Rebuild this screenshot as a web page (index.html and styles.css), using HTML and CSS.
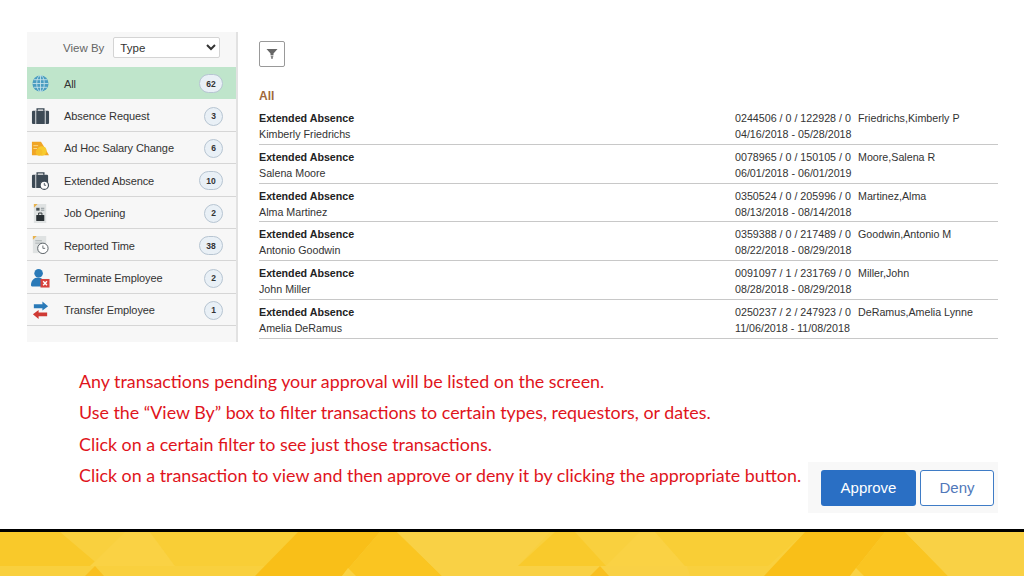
FILE: index.html
```html
<!DOCTYPE html>
<html lang="en">
  <head>
    <meta charset="UTF-8" />
    <title>Pending Approvals</title>
    <link rel="stylesheet" href="styles.css">
  </head>

  <body>
    <div class="top">
      <div class="sidebar">
        <div class="viewby">
          <label for="viewby">View By</label>
          <select id="viewby"><option>Type</option></select>
        </div>
        <div class="side-row active">
          <svg class="icon" viewBox="0 0 20 20"><circle cx="10" cy="10" r="8.500" fill="#4a9cc0"/><g fill="none" stroke="#c5e3ea" stroke-width="0.9"><ellipse cx="10" cy="10" rx="4" ry="8.500"/><path d="M10 1.500v17M1.500 10h17M2.800 6h14.400M2.800 14h14.400"/></g></svg>
          <span class="side-label">All</span><span class="badge wide">62</span>
        </div>
        <div class="side-row">
          <svg class="icon" viewBox="0 0 20 20"><path d="M6.500 4V2h7v2" fill="none" stroke="#3d4a55" stroke-width="1.500"/><rect x="1" y="4" width="18" height="14" rx="1.200" fill="#3d4a55"/><path d="M5 4v14M15 4v14" stroke="#e8eaec" stroke-width="1"/></svg>
          <span class="side-label">Absence Request</span><span class="badge">3</span>
        </div>
        <div class="side-row">
          <svg class="icon" viewBox="0 0 20 20"><path d="M1 3h9.500l2 3 6.500 11H1z" fill="#f0a526"/><path d="M2.500 7h5M2.500 10h4" stroke="#f9d98c" stroke-width="1"/><circle cx="11.500" cy="12.500" r="5" fill="#f8cb2e"/><circle cx="8.500" cy="14" r="3.500" fill="#f6c02a"/></svg>
          <span class="side-label">Ad Hoc Salary Change</span><span class="badge">6</span>
        </div>
        <div class="side-row">
          <svg class="icon" viewBox="0 0 20 20"><path d="M6.500 4V2h7v2" fill="none" stroke="#3d4a55" stroke-width="1.500"/><rect x="1" y="4" width="17" height="14" rx="1.200" fill="#3d4a55"/><path d="M5 4v14" stroke="#e8eaec" stroke-width="1"/><circle cx="14" cy="15" r="4.400" fill="#fff" stroke="#3d4a55" stroke-width="1.200"/><path d="M14 12.600V15h1.900" fill="none" stroke="#3d4a55" stroke-width="0.9"/></svg>
          <span class="side-label">Extended Absence</span><span class="badge wide">10</span>
        </div>
        <div class="side-row">
          <svg class="icon" viewBox="0 0 20 20"><path d="M3 0h13v20H3z" fill="#dfe2e2"/><path d="M3 0h4L3 4z" fill="#e8b24c"/><rect x="5.500" y="4" width="3.500" height="3" fill="#4a5458"/><path d="M10.500 4.500h3.500M10.500 6.500h3.500" stroke="#8a9296"/><rect x="5.500" y="11.500" width="8.500" height="6.500" rx="0.600" fill="#2a3034"/><path d="M8 11.500V9.500h3.500v2" fill="none" stroke="#2a3034"/></svg>
          <span class="side-label">Job Opening</span><span class="badge">2</span>
        </div>
        <div class="side-row">
          <svg class="icon" viewBox="0 0 20 20"><path d="M2 0h14v18H2z" fill="#dfe2e2"/><path d="M2 0h4L2 4z" fill="#e8b24c"/><path d="M4.500 5h7M4.500 7.500h7" stroke="#aab0b2"/><circle cx="12.500" cy="13" r="5.500" fill="#fff" stroke="#555d62" stroke-width="1"/><path d="M12.500 10V13h2.400" fill="none" stroke="#555d62" stroke-width="0.9"/></svg>
          <span class="side-label">Reported Time</span><span class="badge wide">38</span>
        </div>
        <div class="side-row">
          <svg class="icon" viewBox="0 0 20 20"><circle cx="8" cy="4.500" r="4.500" fill="#2a7ab8"/><path d="M0 17c0-4.500 3-8 7.500-8 2 0 3.500.8 4.500 2v7.500H2c-1.200 0-2-.5-2-1.500z" fill="#2a7ab8"/><rect x="10" y="10.500" width="9.500" height="9" fill="#d8413c"/><path d="M12.800 13l4 4M16.800 13l-4 4" stroke="#fff" stroke-width="1.500"/></svg>
          <span class="side-label">Terminate Employee</span><span class="badge">2</span>
        </div>
        <div class="side-row">
          <svg class="icon" viewBox="0 0 20 20"><path d="M3 3.500h9V.5l6 5-6 4.500V7.500H3z" fill="#2a7ab8"/><path d="M17 12h-9V9.500l-6 4.500 6 5v-3h9z" fill="#cf3a34"/></svg>
          <span class="side-label">Transfer Employee</span><span class="badge">1</span>
        </div>
      </div>

      <div class="main">
        <button class="filter-btn" aria-label="Filter">
          <svg viewBox="0 0 12 12" width="12" height="12"><path d="M.5 1h11L7.500 5.500V7h-3V5.500z" fill="#666"/><path d="M4.500 7.500h3L6.600 11H5.400z" fill="#888"/></svg>
        </button>
        <h3 class="group-title">All</h3>
        <div class="list">
          <div class="item">
            <div><b>Extended Absence</b><br />Kimberly Friedrichs</div>
            <div><span class="ids">0244506 / 0 / 122928 / 0</span>Friedrichs,Kimberly P<br />04/16/2018 - 05/28/2018</div>
          </div>
          <div class="item">
            <div><b>Extended Absence</b><br />Salena Moore</div>
            <div><span class="ids">0078965 / 0 / 150105 / 0</span>Moore,Salena R<br />06/01/2018 - 06/01/2019</div>
          </div>
          <div class="item">
            <div><b>Extended Absence</b><br />Alma Martinez</div>
            <div><span class="ids">0350524 / 0 / 205996 / 0</span>Martinez,Alma<br />08/13/2018 - 08/14/2018</div>
          </div>
          <div class="item">
            <div><b>Extended Absence</b><br />Antonio Goodwin</div>
            <div><span class="ids">0359388 / 0 / 217489 / 0</span>Goodwin,Antonio M<br />08/22/2018 - 08/29/2018</div>
          </div>
          <div class="item">
            <div><b>Extended Absence</b><br />John Miller</div>
            <div><span class="ids">0091097 / 1 / 231769 / 0</span>Miller,John<br />08/28/2018 - 08/29/2018</div>
          </div>
          <div class="item">
            <div><b>Extended Absence</b><br />Amelia DeRamus</div>
            <div><span class="ids">0250237 / 2 / 247923 / 0</span>DeRamus,Amelia Lynne<br />11/06/2018 - 11/08/2018</div>
          </div>
        </div>
      </div>
    </div>

    <div class="notes">
      <div class="note-text">
        <p>Any transactions pending your approval will be listed on the screen.</p>
        <p>Use the “View By” box to filter transactions to certain types, requestors, or dates.</p>
        <p>Click on a certain filter to see just those transactions.</p>
        <p>Click on a transaction to view and then approve or deny it by clicking the appropriate button.</p>
      </div>
      <div class="actions">
        <button class="btn approve">Approve</button>
        <button class="btn deny">Deny</button>
      </div>
    </div>

    <div class="footer">
      <svg viewBox="0 0 1024 44" width="1024" height="44" preserveAspectRatio="none">
        <rect width="1024" height="44" fill="#f9d03e"/>
        <polygon points="0,0 60,0 100,34 0,34" fill="#f9c92a"/>
        <polygon points="90,34 125,0 150,0 175,34" fill="#fad244"/>
        <polygon points="175,34 150,0 300,0 265,34" fill="#f9ce36"/>
        <polygon points="85,44 95,34 104,44" fill="#f9c020"/>
        <polygon points="255,44 298,0 380,0 342,44" fill="#f9bf18"/>
        <polygon points="342,44 380,0 397,0 442,44" fill="#fac521"/>
        <polygon points="342,44 348,36 356,44" fill="#fad244"/>
        <polygon points="397,0 550,0 518,34 606,34 640,0 650,0 687,34 690,44 442,44" fill="#f9d145"/>
        <polygon points="518,34 555,0 575,0 606,34" fill="#f9ca2c"/>
        <polygon points="606,34 640,0 660,0 685,34" fill="#fad244"/>
        <polygon points="685,34 655,0 805,0 768,34" fill="#f9ce36"/>
        <polygon points="590,44 600,34 609,44" fill="#f9c020"/>
        <polygon points="764,44 805,0 885,0 850,44" fill="#f9bf18"/>
        <polygon points="850,44 885,0 905,0 948,44" fill="#fac521"/>
        <polygon points="850,44 856,36 864,44" fill="#fad244"/>
        <polygon points="905,0 1024,0 1024,44 948,44" fill="#f9d145"/>
      </svg>
    </div>
  </body>
</html>
```

FILE: styles.css
```css
* {
  margin: 0;
  padding: 0;
  box-sizing: border-box;
}

body {
  width: 1024px;
  height: 576px;
  display: flex;
  flex-direction: column;
  overflow: hidden;
  background-color: white;
  font-family: "Liberation Sans", Arial, sans-serif;
}

.top {
  display: flex;
  padding: 32px 26px 0 27px;
}

/* left filter column */
.sidebar {
  width: 211px;
  height: 310px;
  flex-shrink: 0;
  background-color: #f7f7f7;
  border-right: 2px solid #e2e2e2;
}

.viewby {
  height: 35px;
  display: flex;
  align-items: center;
  padding: 0 0 4px 36px;
  gap: 9px;
  font-size: 11.5px;
  color: #666;
}

.viewby select {
  width: 107px;
  height: 21px;
  padding-left: 2px;
  background-color: white;
  border: 1px solid #d4d4d4;
  border-radius: 2px;
  font-family: inherit;
  font-size: 11.5px;
  color: #333;
}

.side-row {
  height: 32.4px;
  display: flex;
  align-items: center;
  padding: 2px 13px 0 4px;
  border-bottom: 1px solid #d6d6d6;
  font-size: 11px;
  letter-spacing: -0.1px;
  color: #333;
}

.side-row.active {
  background-color: #bfe5cb;
  border-bottom-color: #bfe5cb;
}

.icon {
  width: 19px;
  height: 19px;
  flex-shrink: 0;
  margin-right: 14px;
}

.side-label {
  flex: 1;
}

.badge {
  width: 19px;
  height: 19px;
  border-radius: 10px;
  display: flex;
  justify-content: center;
  align-items: center;
  background-color: #e9f0f6;
  border: 1px solid #b7c5d2;
  font-size: 8.5px;
  font-weight: bold;
  letter-spacing: 0;
  color: #333;
}

.badge.wide {
  width: 24px;
}

/* right list */
.main {
  flex: 1;
  margin-left: 21px;
  padding-top: 9px;
}

.filter-btn {
  width: 26px;
  height: 26px;
  display: flex;
  justify-content: center;
  align-items: center;
  background-color: white;
  border: 1px solid #999;
  border-radius: 2px;
}

.group-title {
  margin-top: 21px;
  height: 16px;
  line-height: 16px;
  font-size: 12px;
  color: #a0693a;
}

.list {
  margin-top: 2px;
}

.item {
  height: 38.8px;
  display: grid;
  grid-template-columns: 476px 1fr;
  padding-top: 4px;
  border-bottom: 1px solid #c8c8c8;
  font-size: 10.7px;
  line-height: 16px;
  color: #333;
}

.item b {
  color: #222;
}

.ids {
  display: inline-block;
  width: 123px;
}

/* instructions under the table */
.notes {
  display: flex;
  padding: 24px 26px 0 79px;
}

.note-text {
  width: 729px;
  font-family: Lato, "Open Sans", sans-serif;
  font-size: 17.85px;
  line-height: 31.4px;
  color: #e0141c;
}

.actions {
  height: 51px;
  margin-top: 96px;
  flex: 1;
  display: flex;
  align-items: center;
  padding-left: 13px;
  gap: 4px;
  background-color: #f8f8f8;
}

.btn {
  height: 36px;
  border-radius: 3px;
  font-family: inherit;
  font-size: 15px;
}

.approve {
  width: 95px;
  background-color: #2a6fc4;
  border: none;
  color: white;
}

.deny {
  width: 74px;
  background-color: white;
  border: 1.5px solid #3f7cc6;
  color: #5078ba;
}

.footer {
  margin-top: auto;
  height: 47px;
  border-top: 3px solid black;
}

.footer svg {
  display: block;
}
```
